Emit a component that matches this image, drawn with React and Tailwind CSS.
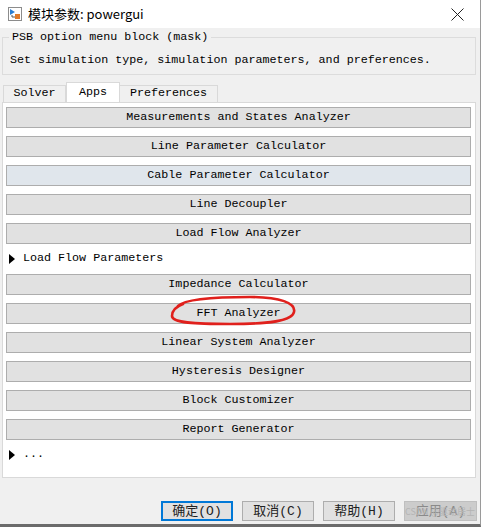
import React from 'react';

const MONO = { fontFamily: '"Liberation Mono", "Noto Sans CJK SC", monospace' };

const APPS_TOP = [
  'Measurements and States Analyzer',
  'Line Parameter Calculator',
  'Cable Parameter Calculator',
  'Line Decoupler',
  'Load Flow Analyzer',
];

const APPS_BOTTOM = [
  'Impedance Calculator',
  'FFT Analyzer',
  'Linear System Analyzer',
  'Hysteresis Designer',
  'Block Customizer',
  'Report Generator',
];

function AppButton({ label }) {
  const tinted = label === 'Cable Parameter Calculator';
  return (
    <button
      className={`h-[21px] w-full border border-[#adadad] text-[11.7px] leading-none text-black ${
        tinted ? 'bg-[#e0e6ec]' : 'bg-[#e1e1e1]'
      }`}
    >
      {label}
    </button>
  );
}

function Expander({ label }) {
  return (
    <div className="flex h-[14px] items-center gap-[8px] pl-[3px] text-[11.7px] leading-none text-black">
      <svg width="6" height="10" viewBox="0 0 6 10">
        <path d="M0 0 L6 5 L0 10 Z" fill="#000" />
      </svg>
      <span>{label}</span>
    </div>
  );
}

function TitleIcon() {
  return (
    <svg width="16" height="16" viewBox="0 0 16 16">
      <rect x="1.5" y="1.5" width="13" height="13" fill="#fff" stroke="#8c8c8c" />
      <path d="M3 3 L8 6 L3 9 Z" fill="#2a7fd4" />
      <rect x="8" y="8" width="5" height="5" fill="#e07a2a" />
      <path d="M5 9 L5 11 L8 11" stroke="#555" fill="none" />
    </svg>
  );
}

export default function App() {
  return (
    <div className="relative h-[527px] w-[482px] overflow-hidden bg-white" style={MONO}>
      <div className="flex h-[527px] w-[481px] flex-col border-r border-b-[3px] border-r-[#9a9a9a] border-b-[#6b6b6b]">
        {/* title bar */}
        <div className="flex h-[28px] shrink-0 items-center bg-white pl-[7px] pr-[16px]">
          <TitleIcon />
          <span
            className="ml-[5px] text-[13px] text-black"
            style={{ fontFamily: '"Noto Sans CJK SC", "Noto Sans", sans-serif' }}
          >
            模块参数: powergui
          </span>
          <svg className="ml-auto" width="13" height="13" viewBox="0 0 13 13">
            <path d="M0.5 0.5 L12.5 12.5 M12.5 0.5 L0.5 12.5" stroke="#222" strokeWidth="1" />
          </svg>
        </div>

        {/* body */}
        <div className="flex flex-1 flex-col bg-[#f0f0f0] pl-[2px]">
          {/* mask group box */}
          <div className="relative mt-[9px] h-[38px] w-[474px] border border-[#dcdcdc] pl-[7px] pt-[15px]">
            <span className="absolute -top-[8px] left-[6px] bg-[#f0f0f0] px-[3px] text-[11.7px] leading-[14px] text-black">
              PSB option menu block (mask)
            </span>
            <div className="text-[11.7px] leading-[14px] text-black">
              Set simulation type, simulation parameters, and preferences.
            </div>
          </div>

          {/* tabs */}
          <div className="mt-[7px] flex h-[20px] items-end pl-[1px] text-[11.7px] leading-none text-black">
            <div className="flex h-[17px] w-[63px] items-center justify-center border border-b-0 border-[#d9d9d9] bg-[#f0f0f0]">
              Solver
            </div>
            <div className="-mb-px flex h-[21px] w-[54px] items-start justify-center border border-b-0 border-[#d9d9d9] bg-white pt-[4px]">
              Apps
            </div>
            <div className="flex h-[17px] w-[98px] items-center justify-center border border-b-0 border-l-0 border-[#d9d9d9] bg-[#f0f0f0]">
              Preferences
            </div>
          </div>

          {/* tab panel */}
          <div className="flex h-[376px] w-[474px] flex-col gap-[8px] border border-[#d9d9d9] bg-white pl-[3px] pr-[4px] pt-[4px]">
            {APPS_TOP.map((a) => (
              <AppButton key={a} label={a} />
            ))}
            <Expander label="Load Flow Parameters" />
            {APPS_BOTTOM.map((a) => (
              <AppButton key={a} label={a} />
            ))}
            <Expander label="..." />
          </div>

          {/* footer buttons */}
          <div className="mt-[23px] flex gap-[9px] pl-[159px] text-[13px] leading-none">
            <button className="h-[20px] w-[72px] border-2 border-[#0078d7] bg-[#e1e1e1] text-[#222]">
              确定(O)
            </button>
            <button className="h-[20px] w-[72px] border border-[#adadad] bg-[#e1e1e1] text-[#222]">
              取消(C)
            </button>
            <button className="h-[20px] w-[72px] border border-[#adadad] bg-[#e1e1e1] text-[#222]">
              帮助(H)
            </button>
            <button className="relative h-[20px] w-[73px] border border-[#bfbfbf] bg-[#cccccc] text-[#8a8a8a]">
              应用(A)
              <span
                className="absolute left-0 top-[5px] whitespace-nowrap text-[9px] leading-none text-[#b4b4b4]"
                style={{ fontFamily: '"Noto Sans CJK SC", "Noto Sans", sans-serif' }}
              >
                CSDN @驱动居士
              </span>
            </button>
          </div>
        </div>
      </div>

      {/* hand-drawn red annotation */}
      <svg className="pointer-events-none absolute left-0 top-0" width="482" height="527">
        <path
          d="M178 306 C186 298 220 297 250 297 C280 297 296 303 294 312 C292 321 270 324 230 324 C195 324 172 323 172 316 C172 311 175 307 183 304"
          fill="none"
          stroke="#e0201c"
          strokeWidth="2.6"
          strokeLinecap="round"
        />
      </svg>
    </div>
  );
}
